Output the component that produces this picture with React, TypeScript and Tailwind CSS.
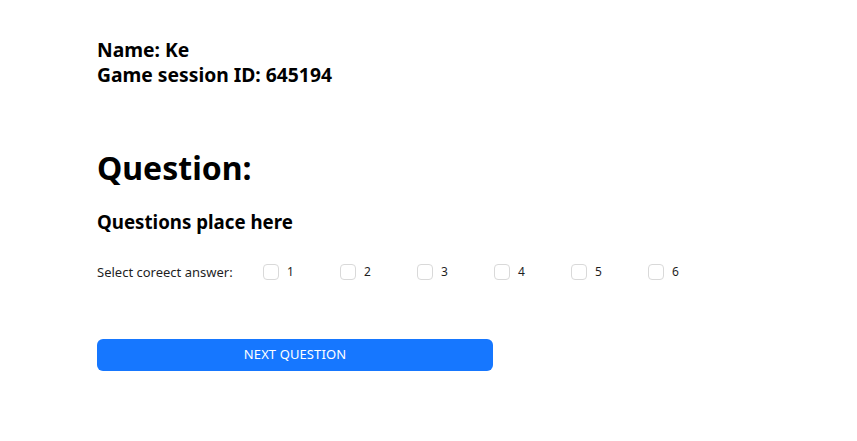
import { useState } from 'react';

const answers = [1, 2, 3, 4, 5, 6];

export default function App() {
  const [picked, setPicked] = useState<number[]>([]);

  const toggle = (n: number) =>
    setPicked((p) => (p.includes(n) ? p.filter((x) => x !== n) : [...p, n]));

  return (
    <main className="min-h-[441px] bg-white pl-[97px] pt-[37px] text-black" style={{ fontFamily: '"Noto Sans", sans-serif' }}>
      <div className="text-[19.3px] font-bold leading-[25px]">
        <div>Name: Ke</div>
        <div>Game session ID: 645194</div>
      </div>

      <h1 className="mt-[61px] text-[32px] font-bold leading-[40px]">Question:</h1>
      <h2 className="mt-[21px] text-[18.7px] font-bold leading-[26px]">Questions place here</h2>

      <div className="mt-[26px] flex items-center text-[13px] leading-[22px] text-[#1f1f1f]">
        <span className="w-[166px]">Select coreect answer:</span>
        {answers.map((n) => (
          <label key={n} className="flex w-[77px] cursor-pointer items-center gap-[8px]">
            <span
              onClick={() => toggle(n)}
              className={
                picked.includes(n)
                  ? 'h-[16px] w-[16px] rounded-[4px] border border-[#1677ff] bg-[#1677ff]'
                  : 'h-[16px] w-[16px] rounded-[4px] border border-[#d9d9d9] bg-white'
              }
            />
            <span className="text-[12px]">{n}</span>
          </label>
        ))}
      </div>

      <button className="mt-[56px] h-[32px] w-[396px] rounded-[6px] bg-[#1677ff] text-[13px] uppercase tracking-[0.1px] text-white">
        Next question
      </button>
    </main>
  );
}
